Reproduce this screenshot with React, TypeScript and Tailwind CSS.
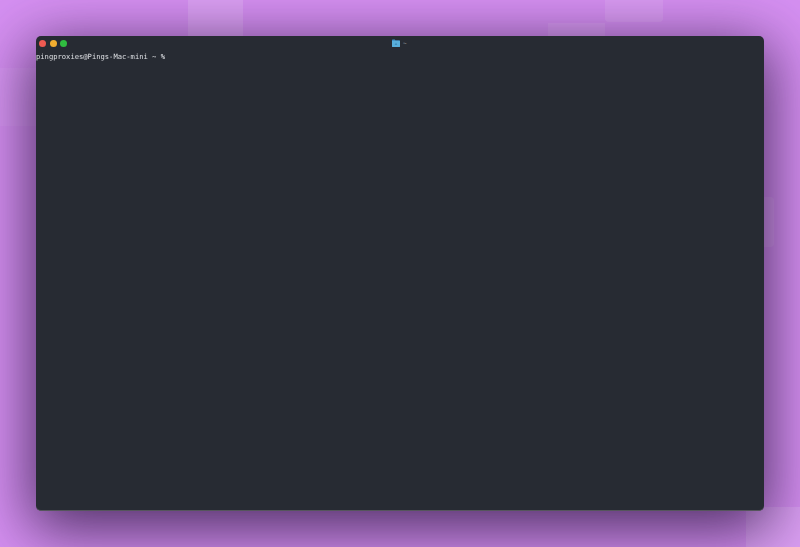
import React from 'react';

// faint tiles behind the terminal window
const tiles = [
  'left-[188px] top-0 w-[55px] h-[40px] bg-white/15',
  'left-[605px] top-0 w-[58px] h-[22px] rounded-b bg-white/10',
  'left-[548px] top-[23px] w-[57px] h-[16px] bg-white/10',
  'left-0 top-[68px] w-[36px] h-[58px] bg-white/5',
  'left-[764px] top-[197px] w-[10px] h-[50px] rounded-r bg-white/10',
  'left-[746px] top-[507px] w-[54px] h-[40px] bg-white/15',
];

function FolderIcon() {
  return (
    <svg width="8" height="8" viewBox="0 0 8 8">
      <path d="M0 1.2C0 .8.3.5.7.5h2l.7.8h3.9c.4 0 .7.3.7.7v5.3c0 .4-.3.7-.7.7H.7C.3 8 0 7.7 0 7.3z" fill="#4394c8" />
      <path d="M0 2h8v5.3c0 .4-.3.7-.7.7H.7C.3 8 0 7.7 0 7.3z" fill="#58aedb" />
      <path d="M4 3.6 5.4 6H2.6z" fill="#3f8cbc" />
    </svg>
  );
}

export default function App() {
  return (
    <div className="relative w-[800px] h-[547px] overflow-hidden bg-[#d690f2]">
      {tiles.map((tile) => (
        <div key={tile} className={`absolute ${tile}`} />
      ))}

      <div className="relative pt-[36px] pl-[36px]">
        <div className="w-[728px] h-[475px] rounded-[5px] bg-[#272b33] border-b border-[#55555c] shadow-[0_14px_60px_6px_rgba(40,20,60,0.78)]">
          <div className="relative flex items-center h-[14px] pl-[3px] gap-[3.5px]">
            <span className="w-[7px] h-[7px] rounded-full bg-[#ee5a52]" />
            <span className="w-[7px] h-[7px] rounded-full bg-[#f2ae30]" />
            <span className="w-[7px] h-[7px] rounded-full bg-[#30bd40]" />
            <div className="absolute left-[356px] top-[3px] flex items-center gap-[3px]">
              <FolderIcon />
              <span className="text-[6px] leading-[8px] text-[#9a9ca2] font-['DejaVu_Sans_Mono',monospace]">~</span>
            </div>
          </div>
          <div className="mt-[2px] text-[7.15px] leading-[10px] text-[#e4e6ea] whitespace-pre opacity-95 blur-[0.25px] font-['DejaVu_Sans_Mono',monospace]">
            pingproxies@Pings-Mac-mini ~ %
          </div>
        </div>
      </div>
    </div>
  );
}
